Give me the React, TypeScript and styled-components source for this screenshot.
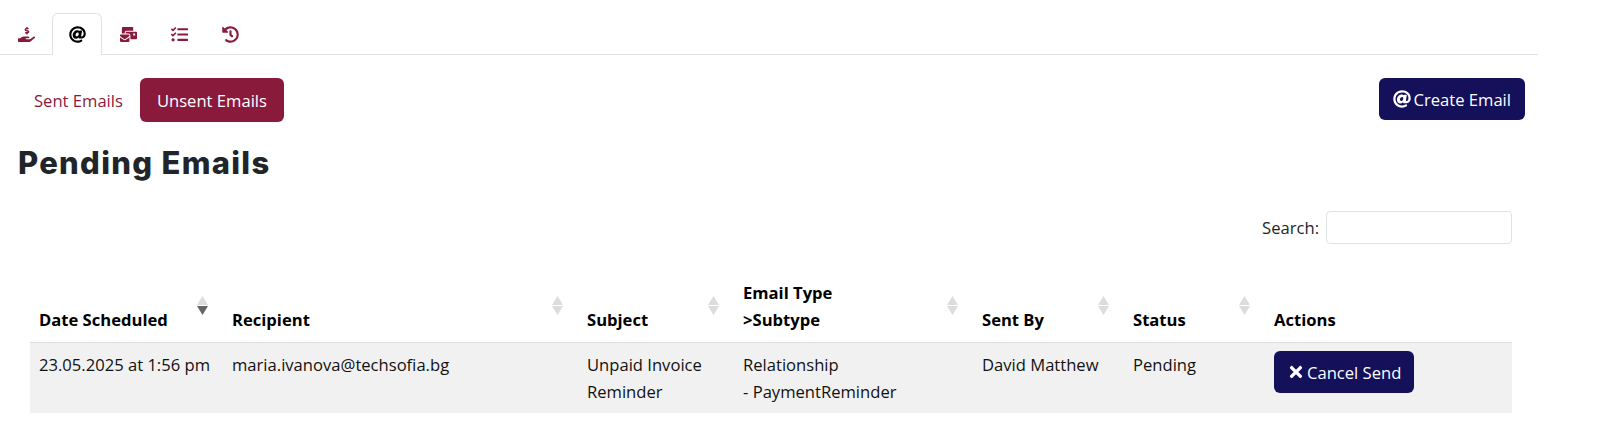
import { createGlobalStyle, styled } from 'styled-components';
import { FaAt, FaHandHoldingUsd, FaHistory, FaMailBulk, FaTasks, FaTimes } from 'react-icons/fa';

const GlobalStyle = createGlobalStyle`
    html, body {
        margin: 0;
        padding: 0;
        background: #fff;
    }
    body {
        font-family: 'Open Sans', 'Noto Sans', sans-serif;
        font-size: 16.6px;
        line-height: 27px;
        color: #212529;
    }
`;

const Page = styled.div`
    width: 1538px;
    height: 436px;
    box-sizing: border-box;
    padding-top: 13px;
`;

const TabBar = styled.div`
    display: flex;
    gap: 1px;
    height: 42px;
    box-sizing: border-box;
    padding-left: 1px;
    border-bottom: 1px solid #dee2e6;
`;

const Tab = styled.div<{ $active?: boolean }>`
    width: 50px;
    height: ${(p) => (p.$active ? '42px' : '41px')};
    box-sizing: border-box;
    display: flex;
    align-items: center;
    justify-content: center;
    font-size: 17px;
    color: ${(p) => (p.$active ? '#000' : '#8a1a3c')};
    background: #fff;
    border: 1px solid ${(p) => (p.$active ? '#dee2e6' : 'transparent')};
    border-bottom: none;
    border-radius: 6px 6px 0 0;
`;

const Toolbar = styled.div`
    display: flex;
    align-items: flex-start;
    justify-content: space-between;
    padding: 23px 13px 0 18px;
`;

const ToggleGroup = styled.div`
    display: flex;
    gap: 1px;
`;

const Toggle = styled.div<{ $active?: boolean }>`
    height: 44px;
    box-sizing: border-box;
    display: flex;
    align-items: center;
    padding: 0 ${(p) => (p.$active ? '17px' : '16px')};
    border-radius: 6px;
    color: ${(p) => (p.$active ? '#fff' : '#8a1a3c')};
    background: ${(p) => (p.$active ? '#8a1a3c' : 'transparent')};
`;

const NavyButton = styled.div`
    height: 42px;
    box-sizing: border-box;
    display: inline-flex;
    align-items: center;
    gap: 3px;
    padding: 0 14px;
    border-radius: 6px;
    color: #fff;
    background: #14105a;

    & > svg {
        font-size: 18px;
    }
`;

const CancelButton = styled(NavyButton)`
    gap: 2px;
    padding: 0 13px;
`;

const Heading = styled.h1`
    margin: 21px 0 0 18px;
    font-family: Inter, sans-serif;
    font-weight: 800;
    font-size: 31px;
    line-height: 40px;
    letter-spacing: 1.3px;
    color: #212529;
`;

const SearchRow = styled.div`
    display: flex;
    align-items: center;
    justify-content: flex-end;
    gap: 7px;
    margin: 28px 26px 0 0;
`;

const SearchInput = styled.div`
    width: 186px;
    height: 33px;
    box-sizing: border-box;
    background: #fff;
    border: 1px solid #dee2e6;
    border-radius: 4px;
`;

const Table = styled.table`
    width: 1482px;
    margin: 28px 0 0 30px;
    border-collapse: collapse;
    table-layout: fixed;
`;

const HeadCell = styled.th<{ $width: number }>`
    position: relative;
    width: ${(p) => p.$width}px;
    box-sizing: border-box;
    padding: 7px 9px 9px;
    text-align: left;
    vertical-align: bottom;
    font-weight: 700;
    color: #000;
    border-bottom: 1px solid #dedede;
`;

const SortMark = styled.svg`
    position: absolute;
    top: 24px;
    right: 15px;
    width: 11px;
    height: 19px;
`;

const BodyRow = styled.tr`
    background: #f1f1f1;
`;

const BodyCell = styled.td`
    padding: 8px 9px;
    vertical-align: top;
    color: #111;
`;

type SortState = 'none' | 'desc';

function SortIcon({ state }: { state: SortState }) {
    return (
        <SortMark viewBox="0 0 11 19">
            <path d="M5.5 0 L11 9 L0 9 Z" fill="#dcdcdc" />
            <path d="M0 10 L11 10 L5.5 19 Z" fill={state === 'desc' ? '#666' : '#dcdcdc'} />
        </SortMark>
    );
}

export default function App() {
    return (
        <>
            <GlobalStyle />
            <Page>
                <TabBar>
                    <Tab><FaHandHoldingUsd /></Tab>
                    <Tab $active><FaAt /></Tab>
                    <Tab><FaMailBulk /></Tab>
                    <Tab><FaTasks /></Tab>
                    <Tab><FaHistory /></Tab>
                </TabBar>
                <Toolbar>
                    <ToggleGroup>
                        <Toggle>Sent Emails</Toggle>
                        <Toggle $active>Unsent Emails</Toggle>
                    </ToggleGroup>
                    <NavyButton><FaAt />Create Email</NavyButton>
                </Toolbar>
                <Heading>Pending Emails</Heading>
                <SearchRow>
                    <span>Search:</span>
                    <SearchInput />
                </SearchRow>
                <Table>
                    <thead>
                        <tr>
                            <HeadCell $width={193}>Date Scheduled<SortIcon state="desc" /></HeadCell>
                            <HeadCell $width={355}>Recipient<SortIcon state="none" /></HeadCell>
                            <HeadCell $width={156}>Subject<SortIcon state="none" /></HeadCell>
                            <HeadCell $width={239}>Email Type<br />&gt;Subtype<SortIcon state="none" /></HeadCell>
                            <HeadCell $width={151}>Sent By<SortIcon state="none" /></HeadCell>
                            <HeadCell $width={141}>Status<SortIcon state="none" /></HeadCell>
                            <HeadCell $width={247}>Actions</HeadCell>
                        </tr>
                    </thead>
                    <tbody>
                        <BodyRow>
                            <BodyCell>23.05.2025 at 1:56 pm</BodyCell>
                            <BodyCell>maria.ivanova@techsofia.bg</BodyCell>
                            <BodyCell>Unpaid Invoice<br />Reminder</BodyCell>
                            <BodyCell>Relationship<br />- PaymentReminder</BodyCell>
                            <BodyCell>David Matthew</BodyCell>
                            <BodyCell>Pending</BodyCell>
                            <BodyCell>
                                <CancelButton><FaTimes />Cancel Send</CancelButton>
                            </BodyCell>
                        </BodyRow>
                    </tbody>
                </Table>
            </Page>
        </>
    );
}
